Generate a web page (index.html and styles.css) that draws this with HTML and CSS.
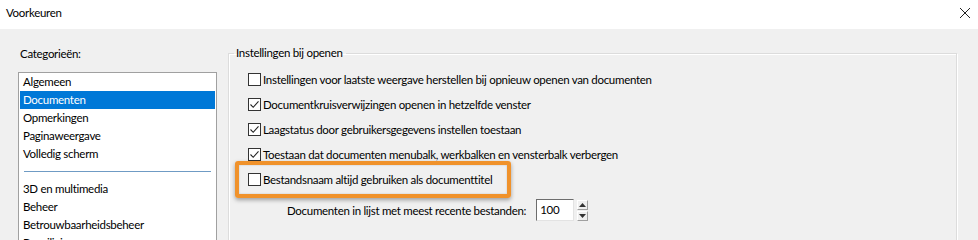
FILE: index.html
```html
<!DOCTYPE html>
<html lang="nl">
<head>
<meta charset="utf-8">
<title>Voorkeuren</title>
<link rel="stylesheet" href="styles.css">
</head>
<body>
<div class="window">
  <div class="titlebar">
    <span class="title">Voorkeuren</span>
    <span class="close" aria-label="Sluiten">
      <svg width="12" height="12" viewBox="0 0 12 12"><path d="M1 1L11 11M11 1L1 11" stroke="#222" stroke-width="1" fill="none"/></svg>
    </span>
  </div>
  <div class="content">
    <div class="left">
      <div class="label">Categorieën:</div>
      <div class="listbox">
        <div class="item">Algemeen</div>
        <div class="item selected">Documenten</div>
        <div class="item">Opmerkingen</div>
        <div class="item">Paginaweergave</div>
        <div class="item">Volledig scherm</div>
        <div class="sep"></div>
        <div class="item">3D en multimedia</div>
        <div class="item">Beheer</div>
        <div class="item">Betrouwbaarheidsbeheer</div>
        <div class="item">Beveiliging</div>
      </div>
    </div>
    <fieldset class="group">
      <legend>Instellingen bij openen</legend>
      <div class="row"><span class="cb"></span><span>Instellingen voor laatste weergave herstellen bij opnieuw openen van documenten</span></div>
      <div class="row"><span class="cb checked"><svg width="11" height="11" viewBox="0 0 11 11"><path d="M1.5 5.5L4.2 8.3L9.5 2.3" stroke="#222" stroke-width="1.1" fill="none"/></svg></span><span>Documentkruisverwijzingen openen in hetzelfde venster</span></div>
      <div class="row"><span class="cb checked"><svg width="11" height="11" viewBox="0 0 11 11"><path d="M1.5 5.5L4.2 8.3L9.5 2.3" stroke="#222" stroke-width="1.1" fill="none"/></svg></span><span>Laagstatus door gebruikersgegevens instellen toestaan</span></div>
      <div class="row"><span class="cb checked"><svg width="11" height="11" viewBox="0 0 11 11"><path d="M1.5 5.5L4.2 8.3L9.5 2.3" stroke="#222" stroke-width="1.1" fill="none"/></svg></span><span>Toestaan dat documenten menubalk, werkbalken en vensterbalk verbergen</span></div>
      <div class="row highlighted"><span class="cb"></span><span>Bestandsnaam altijd gebruiken als documenttitel</span></div>
      <div class="recent">
        <span>Documenten in lijst met meest recente bestanden:</span>
        <span class="num">100</span>
        <span class="spin">
          <span class="spin-btn"><svg width="7" height="4" viewBox="0 0 7 4"><path d="M0 4L3.5 0L7 4Z" fill="#333"/></svg></span>
          <span class="spin-btn"><svg width="7" height="4" viewBox="0 0 7 4"><path d="M0 0L3.5 4L7 0Z" fill="#333"/></svg></span>
        </span>
      </div>
    </fieldset>
  </div>
</div>
</body>
</html>
```
FILE: styles.css
```css
html, body {
  margin: 0;
  padding: 0;
  background: #f0f0f0;
  font-family: Lato, "Noto Sans", sans-serif;
  font-size: 11.5px;
  letter-spacing: -0.3px;
  color: #000;
}
.window {
  width: 978px;
  height: 240px;
  overflow: hidden;
}
.titlebar {
  height: 29px;
  background: #fff;
  display: flex;
  align-items: center;
  justify-content: space-between;
  padding: 0 7px 0 6px;
  box-sizing: border-box;
}
.title {
  line-height: 16px;
  margin-top: -3px;
}
.close {
  display: flex;
  margin-top: -4px;
}
.content {
  display: flex;
  align-items: flex-start;
}
.left {
  padding-left: 18px;
  padding-top: 16px;
  width: 199px;
}
.label {
  padding-left: 2px;
  line-height: 17px;
}
.listbox {
  margin-top: 10px;
  background: #fff;
  border: 1px solid #a0a0a0;
  border-bottom: none;
  height: 200px;
  padding: 0 1px;
}
.item {
  height: 18px;
  line-height: 18px;
  padding-left: 3px;
  white-space: nowrap;
}
.item.selected {
  background: #0078d7;
  color: #fff;
}
.sep {
  height: 1px;
  background: #6f9bc4;
  margin: 8px 4px 8px 4px;
}
.group {
  margin: 16px 0 0 11px;
  padding: 6px 0 0 19px;
  width: 708px;
  height: 220px;
  border: 1px solid #dcdcdc;
  box-shadow: inset 1px 1px 0 #fff, 1px 1px 0 #fff;
  border-bottom: none;
}
.group legend {
  padding: 0 3px 0 2px;
  margin-left: -14px;
  line-height: 16px;
}
.row {
  position: relative;
  display: flex;
  align-items: center;
  height: 25px;
  white-space: nowrap;
}
.cb {
  width: 11px;
  height: 11px;
  border: 1px solid #333;
  background: #fff;
  margin-right: 2px;
  display: flex;
  align-items: center;
  justify-content: center;
  flex: none;
}
.highlighted::before {
  content: "";
  position: absolute;
  left: -13px;
  top: -6px;
  width: 268px;
  height: 29px;
  border: 4px solid #f0922b;
  border-radius: 3px;
  box-shadow: 0 2px 4px rgba(0, 0, 0, 0.35), inset 0 0 2px rgba(0, 0, 0, 0.2);
  pointer-events: none;
}
.recent {
  display: flex;
  align-items: center;
  margin-top: 6px;
  padding-left: 39px;
  height: 24px;
}
.num {
  margin-left: 10px;
  width: 33px;
  height: 20px;
  line-height: 20px;
  background: #fff;
  border-top: 1px solid #6d6d6d;
  border-left: 1px solid #6d6d6d;
  border-right: 1px solid #e3e3e3;
  border-bottom: 1px solid #e3e3e3;
  padding-left: 3px;
}
.spin {
  margin-left: 3px;
  display: flex;
  flex-direction: column;
  gap: 1px;
}
.spin-btn {
  width: 11px;
  height: 10px;
  background: #f0f0f0;
  border: 1px solid #fff;
  border-right-color: #a0a0a0;
  border-bottom-color: #a0a0a0;
  box-sizing: border-box;
  display: flex;
  align-items: center;
  justify-content: center;
}
```
